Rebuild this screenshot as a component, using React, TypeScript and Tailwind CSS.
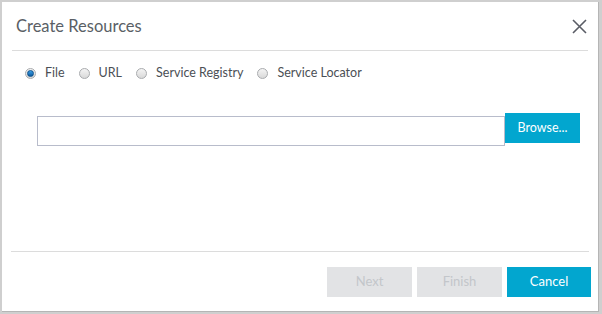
import React, { useState } from 'react';

const options = ['File', 'URL', 'Service Registry', 'Service Locator'];

const Radio: React.FC<{ checked: boolean }> = ({ checked }) => (
  <span className="flex items-center justify-center w-[11px] h-[11px] rounded-full border border-[#a9abae] bg-gradient-to-b from-[#f4f4f4] to-[#d9d9d9]">
    {checked && (
      <span className="w-[7px] h-[7px] rounded-full bg-gradient-to-b from-[#3aa0e8] to-[#0c5a9e] border border-[#0b4f8a]"></span>
    )}
  </span>
);

const App: React.FC = () => {
  const [selected, setSelected] = useState('File');

  return (
    <div className="w-[602px] h-[314px] bg-[#cfcfcf] pt-[2px] pl-[2px] overflow-hidden" style={{ fontFamily: 'Lato, "Open Sans", sans-serif' }}>
      <div className="w-[597px] h-[310px] bg-white border-r border-b border-[#b5b5b5] flex flex-col">
        <div className="flex items-center justify-between h-[48px] pl-[14px] pr-[9px]">
          <h1 className="text-[16.5px] text-[#5a5f66]">Create Resources</h1>
          <button className="w-[20px] h-[20px] flex items-center justify-center text-[#5a5d66]">
            <svg width="15" height="15" viewBox="0 0 15 15" fill="none" stroke="currentColor" strokeWidth="1.6">
              <path d="M1 1L14 14M14 1L1 14" />
            </svg>
          </button>
        </div>
        <div className="mx-[10px] h-px bg-[#dcdcdc]"></div>

        <div className="flex items-center h-[43px] pt-[1px] pl-[23px] text-[12.5px] text-[#4b4f55]">
          {options.map(opt => (
            <label key={opt} onClick={() => setSelected(opt)} className="flex items-center mr-[14px] cursor-pointer">
              <Radio checked={selected === opt} />
              <span className="ml-[9px]">{opt}</span>
            </label>
          ))}
        </div>

        <div className="flex items-start pl-[35px] pt-[19px]">
          <input className="w-[468px] h-[30px] mt-[3px] border border-[#b8bccb] outline-none px-2 text-sm" />
          <button className="w-[75px] h-[30px] bg-[#02a6cf] text-white text-[12.5px]">Browse...</button>
        </div>

        <div className="flex-1"></div>
        <div className="mx-[9px] h-px bg-[#dcdcdc]"></div>

        <div className="flex justify-end gap-[5px] pr-[7px] pt-[15px] pb-[14px]">
          <button className="w-[85px] h-[30px] bg-[#e2e3e5] text-[#c3c6ca] text-[13px]">Next</button>
          <button className="w-[85px] h-[30px] bg-[#e2e3e5] text-[#c3c6ca] text-[13px]">Finish</button>
          <button className="w-[84px] h-[30px] bg-[#02a6cf] text-white text-[13px]">Cancel</button>
        </div>
      </div>
    </div>
  );
};

export default App;
